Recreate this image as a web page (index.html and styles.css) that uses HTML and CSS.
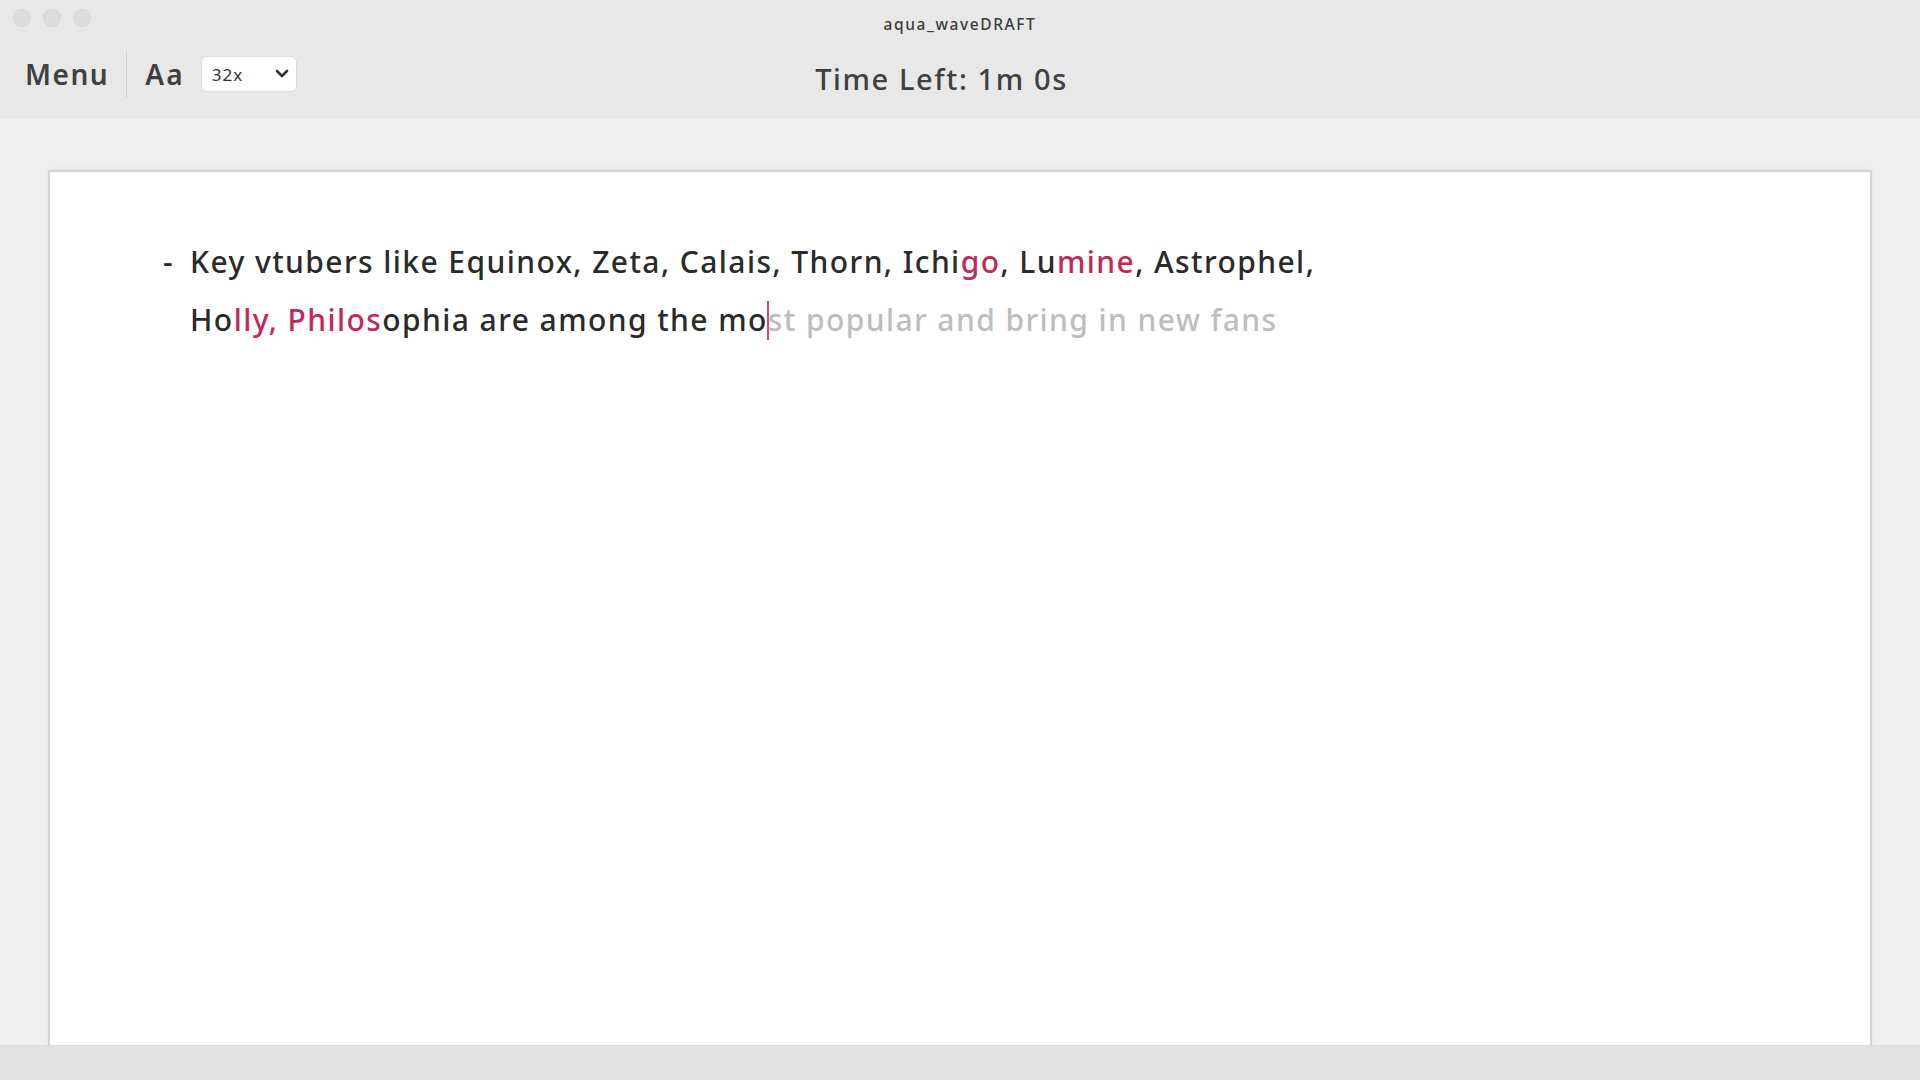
FILE: index.html
```html
<!DOCTYPE html>
<html lang="en">
<head>
<meta charset="utf-8">
<title>aqua_waveDRAFT</title>
<link rel="stylesheet" href="styles.css">
</head>
<body>
<div class="window">
  <header class="chrome">
    <div class="titlebar">
      <div class="lights">
        <span class="light"></span>
        <span class="light"></span>
        <span class="light"></span>
      </div>
      <div class="title">aqua_waveDRAFT</div>
    </div>
    <div class="toolbar">
      <div class="tools">
        <span class="menu">Menu</span>
        <span class="sep"></span>
        <span class="aa">Aa</span>
        <div class="select">
          <span class="select-value">32x</span>
          <svg class="chev" width="14" height="10" viewBox="0 0 14 10"><polyline points="2,2 7,7 12,2" fill="none" stroke="#333" stroke-width="2.6" stroke-linecap="round" stroke-linejoin="round"/></svg>
        </div>
      </div>
      <div class="timer">Time Left: 1m 0s</div>
      <div class="spacer"></div>
    </div>
  </header>
  <main class="workspace">
    <div class="paper">
      <div class="bullet">
        <span class="dash">-</span>
        <p class="line-text">Key vtubers like Equinox, Zeta, Calais, Thorn, Ichi<span class="hl">go</span>, Lu<span class="hl">mine</span>, Astrophel,<br>Ho<span class="hl">lly, Philos</span>ophia are among the mo<span class="caret"></span><span class="ghost">st popular and bring in new fans</span></p>
      </div>
    </div>
  </main>
  <footer class="statusbar"></footer>
</div>
</body>
</html>
```
FILE: styles.css
```css
* { box-sizing: border-box; }
html, body { margin: 0; padding: 0; height: 100%; }
body {
  font-family: "Noto Sans", "Open Sans", sans-serif;
  color: #2b2b2b;
  background: #efefef;
}
.window {
  height: 100vh;
  display: flex;
  flex-direction: column;
}
.chrome {
  background: #e8e8e8;
  height: 119px;
  display: flex;
  flex-direction: column;
}
.titlebar {
  height: 38px;
  display: grid;
  grid-template-columns: 1fr auto 1fr;
  align-items: center;
  padding: 0 13px;
}
.lights { display: flex; gap: 12px; align-items: center; margin-top: -3px; }
.light {
  width: 18px; height: 18px; border-radius: 50%;
  background: #dddddd;
  border: 1px solid #d6d6d6;
}
.title {
  font-size: 15.5px;
  letter-spacing: 1.6px;
  color: #3c3c3c;
  font-weight: 500;
  margin-top: 10px;
}
.toolbar {
  flex: 1;
  display: grid;
  grid-template-columns: 1fr auto 1fr;
  align-items: center;
  padding: 0 0 9px 25px;
}
.tools { display: flex; align-items: center; }
.menu {
  font-size: 28px; font-weight: 560; color: #404040; letter-spacing: 1.5px;
}
.sep {
  width: 1px; height: 47px; background: #d2d2d2;
  margin: 0 18px 0 17px;
}
.aa { font-size: 28px; font-weight: 560; color: #404040; letter-spacing: 2.2px; }
.select {
  margin-left: 16px;
  width: 96px; height: 36px;
  background: #fff;
  border: 1px solid #dcdcdc;
  border-radius: 6px;
  display: flex; align-items: center; justify-content: space-between;
  padding: 0 7px 0 10px;
}
.select-value { font-size: 17px; color: #333; letter-spacing: 1px; }
.timer {
  font-size: 29px; font-weight: 540; color: #404040; letter-spacing: 1.6px;
  margin-right: 62px;
  padding-top: 9px;
}
.workspace {
  flex: 1;
  display: flex;
  padding: 51px 48px 0 48px;
  background: #efefef;
  min-height: 0;
}
.paper {
  flex: 1;
  background: #fff;
  border: 2px solid #d3d3d3;
  border-bottom: none;
  box-shadow: 0 0 6px rgba(0,0,0,0.06);
  padding: 61px 100px 0 113px;
}
.bullet {
  display: flex;
  font-size: 30px;
  font-weight: 500;
  line-height: 57.5px;
  letter-spacing: 1.42px;
  color: #2a2a2a;
}
.dash { width: 27px; flex: none; }
.line-text { margin: 0; }
.line-text br + * { }
.hl { color: #c2285a; }
.ghost { color: #bdbdbd; }
.caret {
  display: inline-block;
  width: 2px; height: 39px;
  background: #d4487c;
  vertical-align: -9px;
  margin: 0 -1px;
}
.statusbar {
  height: 35px;
  background: #e2e2e2;
  border-top: 1px solid #d9d9d9;
}
```
